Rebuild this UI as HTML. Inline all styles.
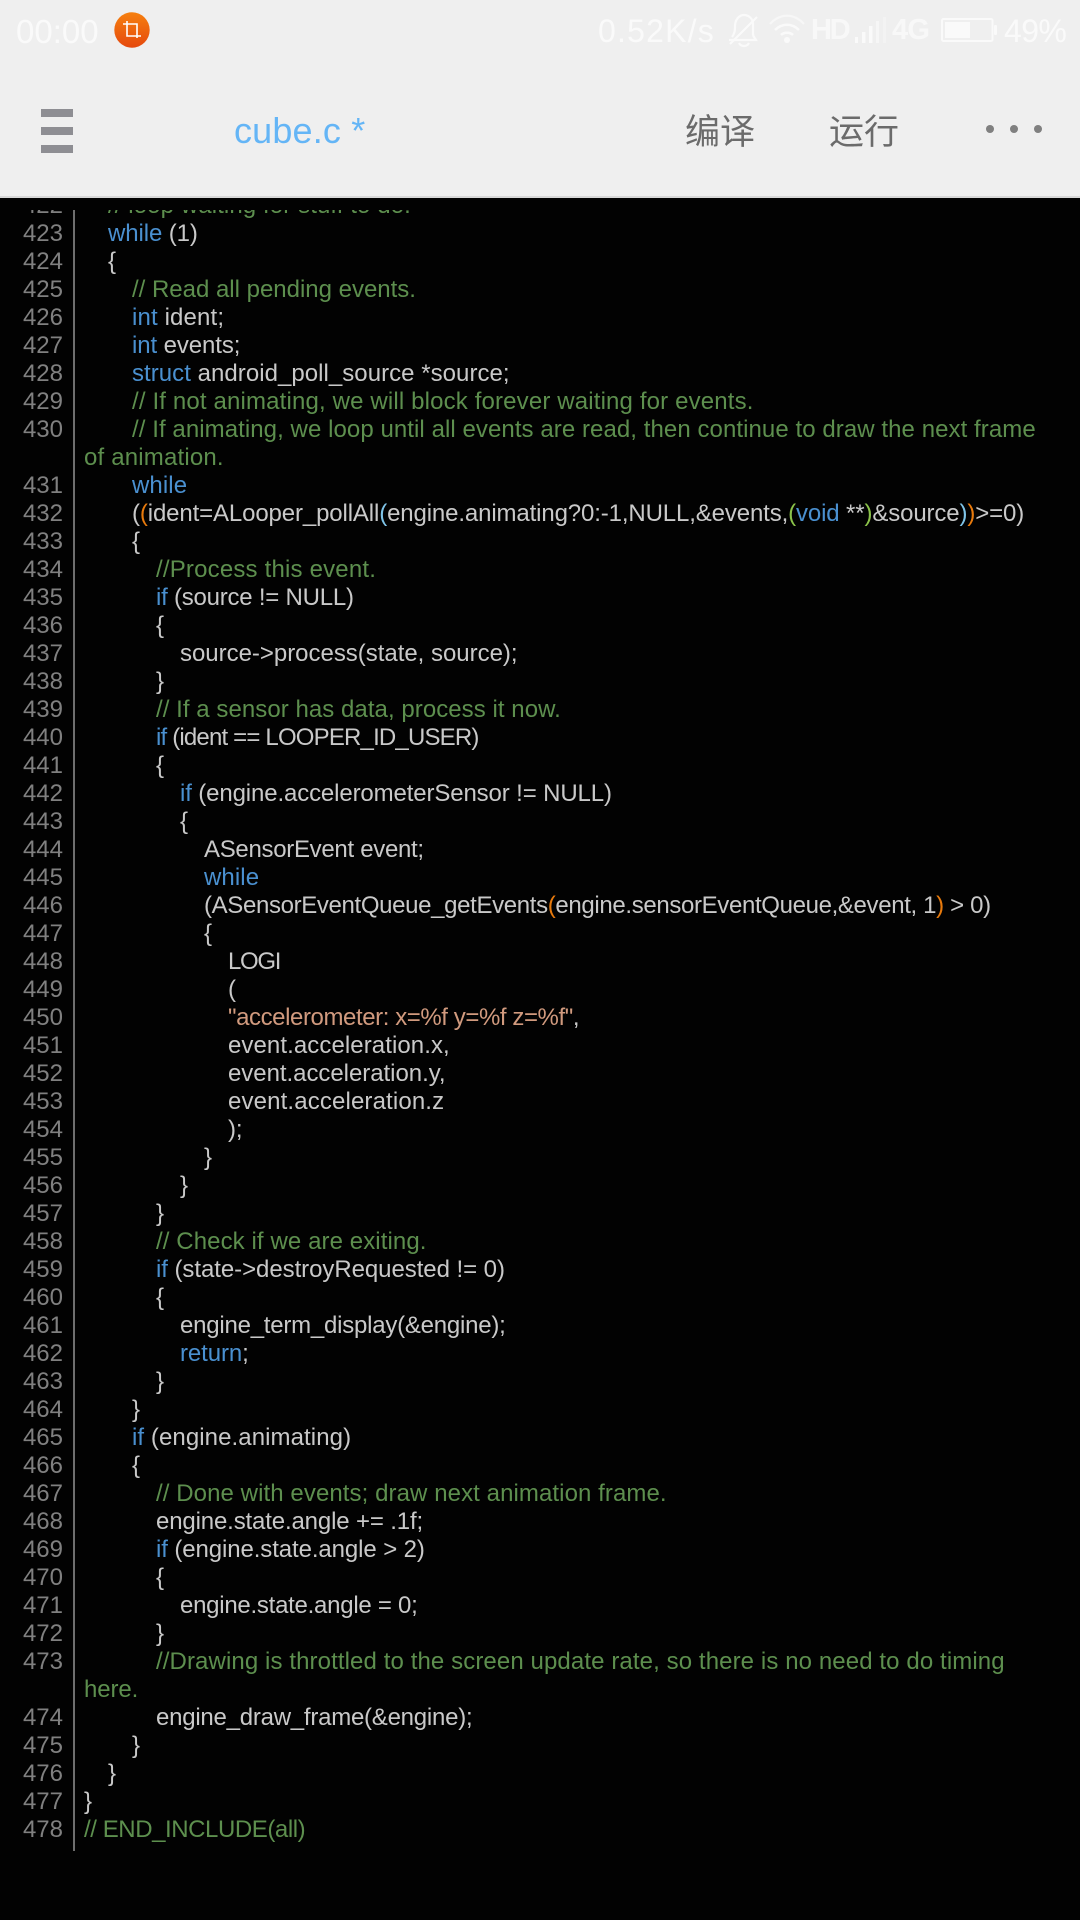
<!DOCTYPE html>
<html lang="zh"><head><meta charset="utf-8"><title>cube.c</title>
<style>
*{margin:0;padding:0;box-sizing:border-box}
html,body{width:1080px;height:1920px;overflow:hidden;background:#020202}
body{position:relative;font-family:"Liberation Sans","Noto Sans CJK SC",sans-serif}
#head{position:absolute;left:0;top:0;width:1080px;height:198px;background:#efefef;border-bottom:2px solid #d8d8d8}
.t{position:absolute;white-space:pre;line-height:1}
#code{position:absolute;left:0;top:210px;width:1080px;height:1641px;overflow:hidden;font-size:24px;color:#c9c9c9;letter-spacing:-.1px}
#rows{position:absolute;left:0;top:-18px;width:1080px}
.r{position:relative;height:28px;line-height:28px;white-space:pre;padding-left:84px}
.r i{position:absolute;left:0;width:63px;top:0;text-align:right;font-style:normal;color:#808080;letter-spacing:0}
.c{color:#5d8f4e}.k{color:#4a90d0}.s{color:#d19a7e}.o{color:#e87a0c}.l{color:#7fc4e8}.g{color:#8bc34a}
.n1{padding-left:108px}.n2{padding-left:132px}.n3{padding-left:156px}.n4{padding-left:180px}.n5{padding-left:204px}.n6{padding-left:228px}
#gut{position:absolute;left:73px;top:210px;width:2px;height:1641px;background:#6e6e6e}
</style></head><body>
<div id="head"></div>
<div class="t" style="left:16px;top:15px;font-size:33px;color:#fafafa">00:00</div>
<svg style="position:absolute;left:0;top:0" width="1080" height="198" viewBox="0 0 1080 198">
<defs><linearGradient id="og" x1="0" y1="0" x2="0" y2="1"><stop offset="0" stop-color="#f6800f"/><stop offset="1" stop-color="#e5490e"/></linearGradient></defs>
<circle cx="132" cy="30" r="17.7" fill="url(#og)"/>
<path d="M123 24H137V38M127 21V36H141" fill="none" stroke="#fff" stroke-width="1.6"/>
<g fill="#8e8e93"><rect x="41" y="109" width="32" height="8"/><rect x="41" y="127" width="32" height="8"/><rect x="41" y="145" width="32" height="8"/></g>
<g fill="#808080"><circle cx="990" cy="129" r="4"/><circle cx="1014" cy="129" r="4"/><circle cx="1038" cy="129" r="4"/></g>
<g fill="none" stroke="#fafafa" stroke-width="2.2">
<path d="M732 37C735 33 735 30 735 26C735 20 739 15 744 15C749 15 753 19 753 24V34C753 37 755 38 756 40H729"/>
<path d="M730 44L757 17"/>
<path d="M739 43C741 47 747 47 749 43"/>
<path d="M770 24C780 13 794 13 804 24" stroke-opacity=".65"/>
<path d="M775 30C782 23 792 23 799 30" stroke-width="2.6"/>
<path d="M781 35C784 32 790 32 793 35" stroke-width="2.6"/>
</g>
<circle cx="787" cy="40" r="3" fill="#fafafa"/>
<g fill="#fafafa"><rect x="855" y="37" width="3" height="6"/><rect x="862" y="32" width="3.5" height="11"/><rect x="869" y="26" width="3.5" height="17"/><rect x="876" y="21" width="3" height="22" opacity=".6"/><rect x="883" y="17" width="3" height="26" opacity=".4"/>
<rect x="945" y="22" width="25" height="16"/><rect x="994" y="25" width="3" height="10" rx="1"/></g>
<rect x="942" y="19" width="50.500" height="22" rx="1.500" fill="none" stroke="#fafafa" stroke-width="2"/>
</svg>
<div class="t" style="left:598px;top:15px;font-size:32px;color:#fafafa;letter-spacing:1.2px">0.52K/s</div>
<div class="t" style="left:811px;top:16px;font-size:29px;font-weight:bold;color:#fafafa;letter-spacing:-2.2px;opacity:.85">HD</div>
<div class="t" style="left:892px;top:16px;font-size:29px;font-weight:bold;color:#fafafa;letter-spacing:-.8px;opacity:.85">4G</div>
<div class="t" style="left:1004px;top:15px;font-size:32px;color:#fafafa;letter-spacing:-.6px">49%</div>
<div class="t" style="left:234px;top:113px;font-size:36px;color:#64b5f6;letter-spacing:.16px">cube.c *</div>
<div class="t" style="left:685px;top:115px;font-size:35px;color:#6b6b6b">编译</div>
<div class="t" style="left:829px;top:115px;font-size:35px;color:#6b6b6b">运行</div>
<div id="gut"></div>
<div id="code"><div id="rows">
<div class="r n1"><i>422</i><span class="c" style="letter-spacing:.1px">// loop waiting for stuff to do.</span></div>
<div class="r n1"><i>423</i><span class="k">while</span> (1)</div>
<div class="r n1"><i>424</i>{</div>
<div class="r n2" style="letter-spacing:-.01px"><i>425</i><span class="c">// Read all pending events.</span></div>
<div class="r n2" style="letter-spacing:.14px"><i>426</i><span class="k">int</span> ident;</div>
<div class="r n2"><i>427</i><span class="k">int</span> events;</div>
<div class="r n2" style="letter-spacing:.04px"><i>428</i><span class="k">struct</span> android_poll_source *source;</div>
<div class="r n2" style="letter-spacing:.15px"><i>429</i><span class="c">// If not animating, we will block forever waiting for events.</span></div>
<div class="r n2" style="letter-spacing:.067px"><i>430</i><span class="c">// If animating, we loop until all events are read, then continue to draw the next frame</span></div>
<div class="r" style="letter-spacing:.18px"><span class="c">of animation.</span></div>
<div class="r n2" style="letter-spacing:.1px"><i>431</i><span class="k">while</span></div>
<div class="r n2" style="letter-spacing:-.13px"><i>432</i>(<span class="o">(</span>ident=ALooper_pollAll<span class="l">(</span>engine.animating?0:-1,NULL,&amp;events,<span class="g">(</span><span class="k">void</span> **<span class="g">)</span>&amp;source<span class="l">)</span><span class="o">)</span>&gt;=0)</div>
<div class="r n2"><i>433</i>{</div>
<div class="r n3" style="letter-spacing:.19px"><i>434</i><span class="c">//Process this event.</span></div>
<div class="r n3" style="letter-spacing:-.23px"><i>435</i><span class="k">if</span> (source != NULL)</div>
<div class="r n3"><i>436</i>{</div>
<div class="r n4" style="letter-spacing:-.02px"><i>437</i>source-&gt;process(state, source);</div>
<div class="r n3"><i>438</i>}</div>
<div class="r n3" style="letter-spacing:.05px"><i>439</i><span class="c">// If a sensor has data, process it now.</span></div>
<div class="r n3" style="letter-spacing:-.82px"><i>440</i><span class="k">if</span> (ident == LOOPER_ID_USER)</div>
<div class="r n3"><i>441</i>{</div>
<div class="r n4" style="letter-spacing:-.13px"><i>442</i><span class="k">if</span> (engine.accelerometerSensor != NULL)</div>
<div class="r n4"><i>443</i>{</div>
<div class="r n5" style="letter-spacing:-.3px"><i>444</i>ASensorEvent event;</div>
<div class="r n5" style="letter-spacing:.1px"><i>445</i><span class="k">while</span></div>
<div class="r n5" style="letter-spacing:-.35px"><i>446</i>(ASensorEventQueue_getEvents<span class="o">(</span>engine.sensorEventQueue,&amp;event, 1<span class="o">)</span> &gt; 0)</div>
<div class="r n5"><i>447</i>{</div>
<div class="r n6" style="letter-spacing:-1.3px"><i>448</i>LOGI</div>
<div class="r n6"><i>449</i>(</div>
<div class="r n6" style="letter-spacing:-.42px"><i>450</i><span class="s">"accelerometer: x=%f y=%f z=%f"</span>,</div>
<div class="r n6" style="letter-spacing:.08px"><i>451</i>event.acceleration.x,</div>
<div class="r n6" style="letter-spacing:-.04px"><i>452</i>event.acceleration.y,</div>
<div class="r n6" style="letter-spacing:.14px"><i>453</i>event.acceleration.z</div>
<div class="r n6"><i>454</i>);</div>
<div class="r n5"><i>455</i>}</div>
<div class="r n4"><i>456</i>}</div>
<div class="r n3"><i>457</i>}</div>
<div class="r n3" style="letter-spacing:.09px"><i>458</i><span class="c">// Check if we are exiting.</span></div>
<div class="r n3" style="letter-spacing:-.06px"><i>459</i><span class="k">if</span> (state-&gt;destroyRequested != 0)</div>
<div class="r n3"><i>460</i>{</div>
<div class="r n4" style="letter-spacing:-.23px"><i>461</i>engine_term_display(&amp;engine);</div>
<div class="r n4"><i>462</i><span class="k">return</span>;</div>
<div class="r n3"><i>463</i>}</div>
<div class="r n2"><i>464</i>}</div>
<div class="r n2" style="letter-spacing:.08px"><i>465</i><span class="k">if</span> (engine.animating)</div>
<div class="r n2"><i>466</i>{</div>
<div class="r n3" style="letter-spacing:.08px"><i>467</i><span class="c">// Done with events; draw next animation frame.</span></div>
<div class="r n3" style="letter-spacing:-.15px"><i>468</i>engine.state.angle += .1f;</div>
<div class="r n3"><i>469</i><span class="k">if</span> (engine.state.angle &gt; 2)</div>
<div class="r n3"><i>470</i>{</div>
<div class="r n4" style="letter-spacing:-.26px"><i>471</i>engine.state.angle = 0;</div>
<div class="r n3"><i>472</i>}</div>
<div class="r n3" style="letter-spacing:.1px"><i>473</i><span class="c">//Drawing is throttled to the screen update rate, so there is no need to do timing</span></div>
<div class="r"><span class="c">here.</span></div>
<div class="r n3" style="letter-spacing:-.24px"><i>474</i>engine_draw_frame(&amp;engine);</div>
<div class="r n2"><i>475</i>}</div>
<div class="r n1"><i>476</i>}</div>
<div class="r"><i>477</i>}</div>
<div class="r" style="letter-spacing:-.43px"><i>478</i><span class="c">// END_INCLUDE(all)</span></div>
</div></div>
</body></html>
